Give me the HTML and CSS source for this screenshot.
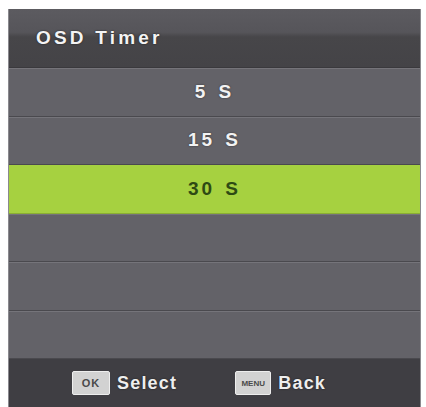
FILE: index.html
```html
<!DOCTYPE html>
<html lang="en">
<head>
    <meta charset="UTF-8">
    <meta name="viewport" content="width=device-width, initial-scale=1.0">
    <title>OSD Timer</title>
    <link rel="stylesheet" href="styles.css">
</head>
<body>
    <div class="osd">
        <div class="osd-title">OSD Timer</div>
        <ul class="options">
            <li class="option">5 S</li>
            <li class="option">15 S</li>
            <li class="option selected">30 S</li>
            <li class="option"></li>
            <li class="option"></li>
            <li class="option"></li>
        </ul>
        <div class="hints">
            <div class="hint">
                <span class="key">OK</span>
                <span class="label">Select</span>
            </div>
            <div class="hint">
                <span class="key key-menu">MENU</span>
                <span class="label">Back</span>
            </div>
        </div>
    </div>
</body>
</html>
```

FILE: styles.css
```css
body {
    margin: 0;
    background: #ffffff;
    font-family: 'Liberation Sans', Arial, sans-serif;
    height: 407px;
    overflow: hidden;
}

.osd {
    margin: 9px 0 0 8px;
    width: 413px;
    background: #616066;
    border-left: 1px solid #8a898e;
    border-right: 1px solid #8a898e;
    box-sizing: border-box;
}

.osd-title {
    height: 59px;
    display: flex;
    align-items: center;
    padding-left: 27px;
    color: #f4f4f4;
    font-size: 19px;
    font-weight: bold;
    letter-spacing: 3.2px;
    text-shadow: 0 0 2px rgba(0, 0, 0, 0.6);
    background: linear-gradient(to bottom, #5c5b60 0%, #56555a 40%, #474649 48%, #444347 100%);
    border-bottom: 1px solid #3a393d;
    box-sizing: border-box;
}

.options {
    list-style: none;
    margin: 0;
    padding: 0;
}

.option {
    height: 48.5px;
    display: flex;
    align-items: center;
    justify-content: center;
    color: #f2f2f2;
    font-size: 19px;
    font-weight: bold;
    letter-spacing: 3px;
    word-spacing: 2px;
    text-shadow: 0 0 2px rgba(0, 0, 0, 0.5);
    background: #636268;
    border-bottom: 1px solid #4a494e;
    box-shadow: inset 0 1px 0 #75747a;
    box-sizing: border-box;
}

.option.selected {
    background: #a6d140;
    color: #2e4a14;
    text-shadow: none;
    border-bottom-color: #8aae33;
    box-shadow: none;
}

.hints {
    height: 48px;
    display: flex;
    align-items: center;
    gap: 58px;
    padding-left: 63px;
    background: #3f3e43;
}

.hint {
    display: flex;
    align-items: center;
    gap: 7px;
}

.key {
    width: 38px;
    height: 24px;
    display: flex;
    align-items: center;
    justify-content: center;
    background: #d2d2d2;
    border: 1px solid #eeeeee;
    border-radius: 2px;
    box-sizing: border-box;
    color: #4a4a4a;
    font-size: 11px;
    font-weight: bold;
    letter-spacing: 1px;
}

.key-menu {
    width: 36px;
    font-size: 8px;
    letter-spacing: 0;
}

.label {
    color: #eeeeee;
    font-size: 18px;
    font-weight: bold;
    letter-spacing: 1.2px;
    text-shadow: 0 0 2px rgba(0, 0, 0, 0.6);
}
```
